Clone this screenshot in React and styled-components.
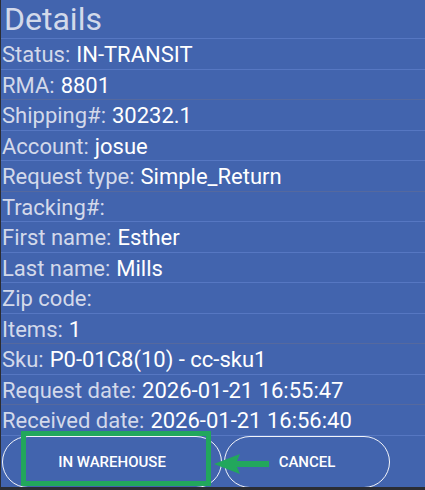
import styled, { createGlobalStyle } from "styled-components";

const GlobalStyle = createGlobalStyle`
  html, body {
    margin: 0;
    padding: 0;
    background: #2b2d33;
  }
  body {
    font-family: Roboto, "Noto Sans", sans-serif;
  }
`;

const Screen = styled.div`
  position: relative;
  width: 424px;
  height: 487px;
  margin-left: 1px;
  background: #4264ae;
  overflow: hidden;
`;

const Title = styled.div`
  box-sizing: border-box;
  height: 39px;
  padding: 2px 0 0 3px;
  font-size: 32px;
  line-height: 34px;
  color: #d2d9ea;
  border-bottom: 1px solid #5677c2;
`;

const Row = styled.div`
  box-sizing: border-box;
  height: 30.5px;
  padding: 2px 0 0 1px;
  display: flex;
  align-items: center;
  font-size: 22px;
  white-space: nowrap;
  border-bottom: 1px solid ${(p) => (p.$muted ? "#55699f" : "#5677c2")};
`;

const Label = styled.span`
  color: #d3d9ea;
`;

const Value = styled.span`
  color: #ffffff;
  margin-left: 6px;
`;

const Buttons = styled.div`
  display: flex;
  gap: 2px;
  padding-left: 1px;
`;

const PillButton = styled.button`
  width: ${(p) => p.$w}px;
  height: 52px;
  border: 1px solid #f2f4fa;
  border-radius: 26px;
  background: transparent;
  color: #ffffff;
  font-family: Roboto, sans-serif;
  font-weight: 500;
  font-size: 15px;
  text-transform: uppercase;
`;

const Highlight = styled.div`
  position: absolute;
  left: 20px;
  top: 431px;
  width: 180px;
  height: 45px;
  border: 5px solid #22a75c;
`;

const Arrow = styled.svg`
  position: absolute;
  left: 210px;
  top: 450px;
`;

const rows = [
  ["Status:", "IN-TRANSIT"],
  ["RMA:", "8801", true],
  ["Shipping#:", "30232.1"],
  ["Account:", "josue"],
  ["Request type:", "Simple_Return", true],
  ["Tracking#:", ""],
  ["First name:", "Esther"],
  ["Last name:", "Mills"],
  ["Zip code:", ""],
  ["Items:", "1", true],
  ["Sku:", "P0-01C8(10) - cc-sku1"],
  ["Request date:", "2026-01-21 16:55:47", true],
  ["Received date:", "2026-01-21 16:56:40"],
];

export default function App() {
  return (
    <>
      <GlobalStyle />
      <Screen>
        <Title>Details</Title>
        {rows.map(([label, value, muted]) => (
          <Row key={label} $muted={muted}>
            <Label>{label}</Label>
            {value && <Value>{value}</Value>}
          </Row>
        ))}
        <Buttons>
          <PillButton $w={220}>In warehouse</PillButton>
          <PillButton $w={166}>Cancel</PillButton>
        </Buttons>
        <Highlight />
        <Arrow width="62" height="28" viewBox="0 0 62 28">
          <path d="M3 14 L29 4 L26 11 L58 11 L58 17 L26 17 L29 24 Z" fill="#22a75c" />
        </Arrow>
      </Screen>
    </>
  );
}
